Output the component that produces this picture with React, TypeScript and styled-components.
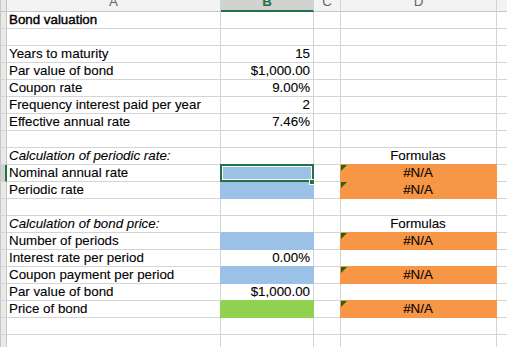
import React from 'react'
import styled, { createGlobalStyle, css } from 'styled-components'

const GRID = '#d4d4d4'
const ACCENT = '#217346'
const BLUE = '#9bc2e6'
const ORANGE = '#f79646'
const GREEN = '#92d050'

const GlobalStyle = createGlobalStyle`
    html, body {
        margin: 0;
        padding: 0;
        background: #fff;
        overflow: hidden;
    }
    body {
        font-family: "Liberation Sans", Arial, sans-serif;
    }
`;

// column E runs on past the window, as it does in the sheet
const Sheet = styled.div`
    display: grid;
    grid-template-columns: 7px 214px 93px 27px 156px 80px;
    grid-template-rows: 12px;
    grid-auto-rows: 17px;
    width: 507px;
    height: 347px;
    overflow: hidden;
    font-size: 13.33px;
    color: #000;
`;

const Corner = styled.div`
    box-sizing: border-box;
    background: #e9e9e9;
    border-left: 1px solid #c6c6c6;
    border-right: 1px solid #c6c6c6;
    border-bottom: 1px solid #c6c6c6;
`;

const ColHead = styled.div<{ $active?: boolean }>`
    box-sizing: border-box;
    display: flex;
    align-items: flex-end;
    justify-content: center;
    overflow: hidden;
    background: ${p => (p.$active ? '#d2d2d2' : '#f3f3f3')};
    border-right: 1px solid ${GRID};
    border-bottom: ${p => (p.$active ? `2px solid ${ACCENT}` : '1px solid #c6c6c6')};
`;

const ColLabel = styled.span<{ $active?: boolean }>`
    line-height: ${p => (p.$active ? 17 : 18)}px;
    font-size: 13.33px;
    color: ${p => (p.$active ? ACCENT : '#666')};
    font-weight: ${p => (p.$active ? 'bold' : 'normal')};
`;

const RowHead = styled.div<{ $active?: boolean }>`
    box-sizing: border-box;
    background: ${p => (p.$active ? '#d2d2d2' : '#e9e9e9')};
    border-left: 1px solid #c6c6c6;
    border-right: ${p => (p.$active ? `2px solid ${ACCENT}` : '1px solid #c6c6c6')};
    border-bottom: 1px solid ${GRID};
`;

const Cell = styled.div<{
    $align?: 'left' | 'right' | 'center'
    $fill?: string
    $italic?: boolean
    $strong?: boolean
}>`
    position: relative;
    box-sizing: border-box;
    padding: 0 3px 0 2px;
    line-height: 16px;
    white-space: nowrap;
    text-align: ${p => p.$align || 'left'};
    border-right: 1px solid ${GRID};
    border-bottom: 1px solid ${GRID};
    font-style: ${p => (p.$italic ? 'italic' : 'normal')};
    -webkit-text-stroke: ${p => (p.$strong ? 0.4 : 0.1)}px #000;
    ${p => p.$fill && css`
        background: ${p.$fill};
        border-color: ${p.$fill};
        box-shadow: -1px 0 0 ${p.$fill}, 0 -1px 0 ${p.$fill};
    `}
`;

const Selection = styled.div`
    position: absolute;
    inset: -1px;
    z-index: 2;
    border: 2px solid ${ACCENT};
    box-shadow: inset 0 0 0 1px #fff;
`;

const Handle = styled.div`
    position: absolute;
    right: -3px;
    bottom: -5px;
    width: 6px;
    height: 6px;
    box-sizing: border-box;
    background: ${ACCENT};
    border: 1px solid #fff;
`;

const ErrorFlag = styled.span`
    position: absolute;
    top: 0;
    left: 0;
    width: 0;
    height: 0;
    border-top: 6px solid #1a661a;
    border-right: 6px solid transparent;
`;

type Row = {
    a?: string
    b?: string
    d?: string
    strong?: boolean
    italic?: boolean
    bFill?: string
    error?: boolean
    selected?: boolean
}

const rows: Row[] = [
    { a: 'Bond valuation', strong: true },
    {},
    { a: 'Years to maturity', b: '15' },
    { a: 'Par value of bond', b: '$1,000.00' },
    { a: 'Coupon rate', b: '9.00%' },
    { a: 'Frequency interest paid per year', b: '2' },
    { a: 'Effective annual rate', b: '7.46%' },
    {},
    { a: 'Calculation of periodic rate:', italic: true, d: 'Formulas' },
    { a: 'Nominal annual rate', bFill: BLUE, d: '#N/A', error: true, selected: true },
    { a: 'Periodic rate', bFill: BLUE, d: '#N/A', error: true },
    {},
    { a: 'Calculation of bond price:', italic: true, d: 'Formulas' },
    { a: 'Number of periods', bFill: BLUE, d: '#N/A', error: true },
    { a: 'Interest rate per period', b: '0.00%' },
    { a: 'Coupon payment per period', bFill: BLUE, d: '#N/A', error: true },
    { a: 'Par value of bond', b: '$1,000.00' },
    { a: 'Price of bond', bFill: GREEN, d: '#N/A', error: true },
    {},
    {},
]

const columns = ['A', 'B', 'C', 'D', 'E']

export default function App() {
    return (
        <>
            <GlobalStyle />
            <Sheet>
                <Corner />
                {columns.map(c => (
                    <ColHead key={c} $active={c === 'B'}>
                        <ColLabel $active={c === 'B'}>{c}</ColLabel>
                    </ColHead>
                ))}
                {rows.map((r, i) => (
                    <React.Fragment key={i}>
                        <RowHead $active={r.selected} />
                        <Cell $italic={r.italic} $strong={r.strong}>{r.a}</Cell>
                        <Cell $align="right" $fill={r.bFill}>
                            {r.b}
                            {r.selected && (
                                <Selection>
                                    <Handle />
                                </Selection>
                            )}
                        </Cell>
                        <Cell />
                        <Cell $align="center" $fill={r.error ? ORANGE : undefined}>
                            {r.error && <ErrorFlag />}
                            {r.d}
                        </Cell>
                        <Cell />
                    </React.Fragment>
                ))}
            </Sheet>
        </>
    )
}
